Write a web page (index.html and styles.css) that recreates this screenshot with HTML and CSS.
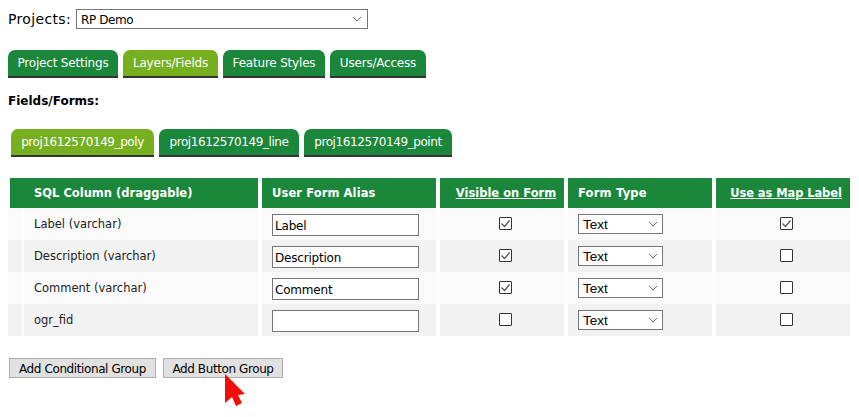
FILE: index.html
```
<!DOCTYPE html>
<html lang="en">
<head>
<meta charset="utf-8">
<title>Projects</title>
<link rel="stylesheet" href="styles.css">
</head>
<body>
<div class="project-row">
  <label class="project-label" for="project">Projects:</label>
  <select id="project" class="project-select"><option>RP Demo</option></select>
</div>
<nav class="tabs main-tabs">
  <a class="tab tab-settings">Project Settings</a>
  <a class="tab tab-layers active">Layers/Fields</a>
  <a class="tab tab-styles">Feature Styles</a>
  <a class="tab tab-users">Users/Access</a>
</nav>
<h2 class="section-title">Fields/Forms:</h2>
<nav class="tabs sub-tabs">
  <a class="tab sub active">proj1612570149_poly</a>
  <a class="tab sub">proj1612570149_line</a>
  <a class="tab sub">proj1612570149_point</a>
</nav>
<table class="fields">
  <colgroup>
    <col class="c-handle"><col class="c-sql"><col class="c-alias"><col class="c-vis"><col class="c-type"><col class="c-map">
  </colgroup>
  <thead>
    <tr>
      <th colspan="2" class="h-sql"><span>SQL Column (draggable)</span></th>
      <th class="h-alias"><span>User Form Alias</span></th>
      <th class="center"><span class="link">Visible on Form</span></th>
      <th class="h-type"><span>Form Type</span></th>
      <th class="center last"><span class="link">Use as Map Label</span></th>
    </tr>
  </thead>
  <tbody>
    <tr>
      <td class="handle"></td><td class="name">Label (varchar)</td>
      <td><input class="alias" type="text" value="Label"></td>
      <td class="center"><input class="check" type="checkbox" checked></td>
      <td><select class="type"><option>Text</option></select></td>
      <td class="center last"><input class="check" type="checkbox" checked></td>
    </tr>
    <tr>
      <td class="handle"></td><td class="name">Description (varchar)</td>
      <td><input class="alias" type="text" value="Description"></td>
      <td class="center"><input class="check" type="checkbox" checked></td>
      <td><select class="type"><option>Text</option></select></td>
      <td class="center last"><input class="check" type="checkbox"></td>
    </tr>
    <tr>
      <td class="handle"></td><td class="name">Comment (varchar)</td>
      <td><input class="alias" type="text" value="Comment"></td>
      <td class="center"><input class="check" type="checkbox" checked></td>
      <td><select class="type"><option>Text</option></select></td>
      <td class="center last"><input class="check" type="checkbox"></td>
    </tr>
    <tr>
      <td class="handle"></td><td class="name">ogr_fid</td>
      <td><input class="alias" type="text" value=""></td>
      <td class="center"><input class="check" type="checkbox"></td>
      <td><select class="type"><option>Text</option></select></td>
      <td class="center last"><input class="check" type="checkbox"></td>
    </tr>
  </tbody>
</table>
<div class="actions">
  <button class="btn" type="button">Add Conditional Group</button>
  <button class="btn" type="button">Add Button Group</button>
  <svg class="cursor" width="21" height="32" viewBox="0 0 21 32" aria-hidden="true"><path d="M0 0 L20 20 L13 21 L17 29 L11 32 L7 23 L0 29 Z" fill="#f20d05"/></svg>
</div>
</body>
</html>
```
FILE: styles.css
```
* { box-sizing: border-box; }
html, body { height: 100%; }
body {
  margin: 0;
  padding: 9px 0 0 8px;
  background: #fff;
  color: #000;
  font-family: "DejaVu Sans", Verdana, sans-serif;
  font-size: 12px;
  overflow: hidden;
}
.project-row { display: flex; align-items: center; height: 20px; }
.project-label { font-size: 14px; letter-spacing: 0.35px; width: 68px; }
.project-select, .type {
  appearance: none;
  border: 1px solid #767676;
  border-radius: 0;
  background-color: #fff;
  background-image: url("data:image/svg+xml,%3Csvg xmlns='http://www.w3.org/2000/svg' width='10' height='6'%3E%3Cpath d='M1 1l4 4 4-4' fill='none' stroke='%23666' stroke-width='1'/%3E%3C/svg%3E");
  background-repeat: no-repeat;
  color: #000;
}
.project-select {
  width: 292px;
  height: 20px;
  padding: 1px 0 0 4px;
  font: 12px "DejaVu Sans", sans-serif;
  letter-spacing: -0.4px;
  background-position: right 5px center;
}
.tabs { display: flex; }
.main-tabs { margin-top: 21px; gap: 5px; }
.tab {
  display: block;
  height: 28px;
  border-bottom: 2px solid #333;
  border-radius: 7px 7px 0 0;
  background: #1a873b;
  color: #fff;
  line-height: 27px;
  text-align: center;
  font-size: 12px;
  letter-spacing: -0.2px;
}
.tab.active { background: #76b01f; }
.tab-settings { width: 110px; }
.tab-layers { width: 95px; }
.tab-styles { width: 102px; }
.tab-users { width: 96px; }
.section-title { margin: 16px 0 0; font-size: 12px; line-height: 15px; font-weight: bold; }
.sub-tabs { margin: 20px 0 0 3px; gap: 5px; }
.sub { padding: 0 10px; letter-spacing: -0.42px; }
.sub:nth-child(1) { width: 143px; }
.sub:nth-child(2) { width: 140px; }
.sub:nth-child(3) { width: 148px; }
.fields {
  margin-top: 21px;
  border-collapse: separate;
  border-spacing: 0;
  table-layout: fixed;
  width: 842px;
}
.c-handle { width: 16px; }
.c-sql { width: 238px; }
.c-alias { width: 178px; }
.c-vis { width: 128px; }
.c-type { width: 148px; }
.c-map { width: 134px; }
th, td { padding: 0; border-right: 4px solid #fff; }
.last { border-right: 0; }
th {
  height: 30px;
  background: #1a873b;
  color: #fff;
  font-size: 11.500px;
  font-weight: bold;
  text-align: left;
  white-space: nowrap;
}
.h-sql { border-left: 2px solid #fff; padding-left: 24px; }
.h-alias { padding-left: 10px; letter-spacing: 0.1px; }
.h-type { padding-left: 10px; letter-spacing: 0.2px; }
th.center { text-align: center; padding-left: 8px; }
th.last { padding-left: 6px; letter-spacing: -0.1px; }
.link { text-decoration: underline; }
td { height: 32px; background: #f2f2f2; }
tbody tr:nth-child(odd) td { background: #fafafa; }
.handle { border-right-width: 2px; }
.name { padding: 0 0 1px 10px; font-size: 11.500px; color: #222; white-space: nowrap; }
td:not(.name):not(.handle) { padding-left: 10px; }
td.center:not(.name):not(.handle) { padding-left: 6px; text-align: center; }
.alias {
  display: block;
  width: 147px;
  height: 22px;
  padding: 1px 2px 0;
  border: 1px solid #767676;
  background: #fff;
  font: 12px "DejaVu Sans", sans-serif;
  letter-spacing: -0.2px;
  color: #000;
  margin-top: 2px;
}
.type {
  display: block;
  width: 85px;
  height: 20px;
  padding: 0 0 0 4px;
  font: 13.500px "Liberation Sans", sans-serif;
  background-position: right 4px center;
}
.check {
  appearance: none;
  display: block;
  margin: 0 auto 2px;
  width: 13px;
  height: 13px;
  border: 1px solid #333;
  background: #fff;
  border-radius: 1px;
}
.check:checked {
  background-image: url("data:image/svg+xml,%3Csvg xmlns='http://www.w3.org/2000/svg' width='11' height='11'%3E%3Cpath d='M1.500 5.500l3 3 5-6' fill='none' stroke='%23555' stroke-width='1.200'/%3E%3C/svg%3E");
  background-repeat: no-repeat;
}
.actions { position: relative; display: flex; gap: 7px; margin: 22px 0 0 1px; }
.btn {
  height: 20px;
  padding: 1px 0 0;
  border: 1px solid #adadad;
  background: #e1e1e1;
  color: #000;
  font: 12px "DejaVu Sans", sans-serif;
  letter-spacing: -0.4px;
}
.btn:nth-child(1) { width: 147px; }
.btn:nth-child(2) { width: 120px; }
.cursor { position: absolute; left: 216px; top: 16px; }
```
